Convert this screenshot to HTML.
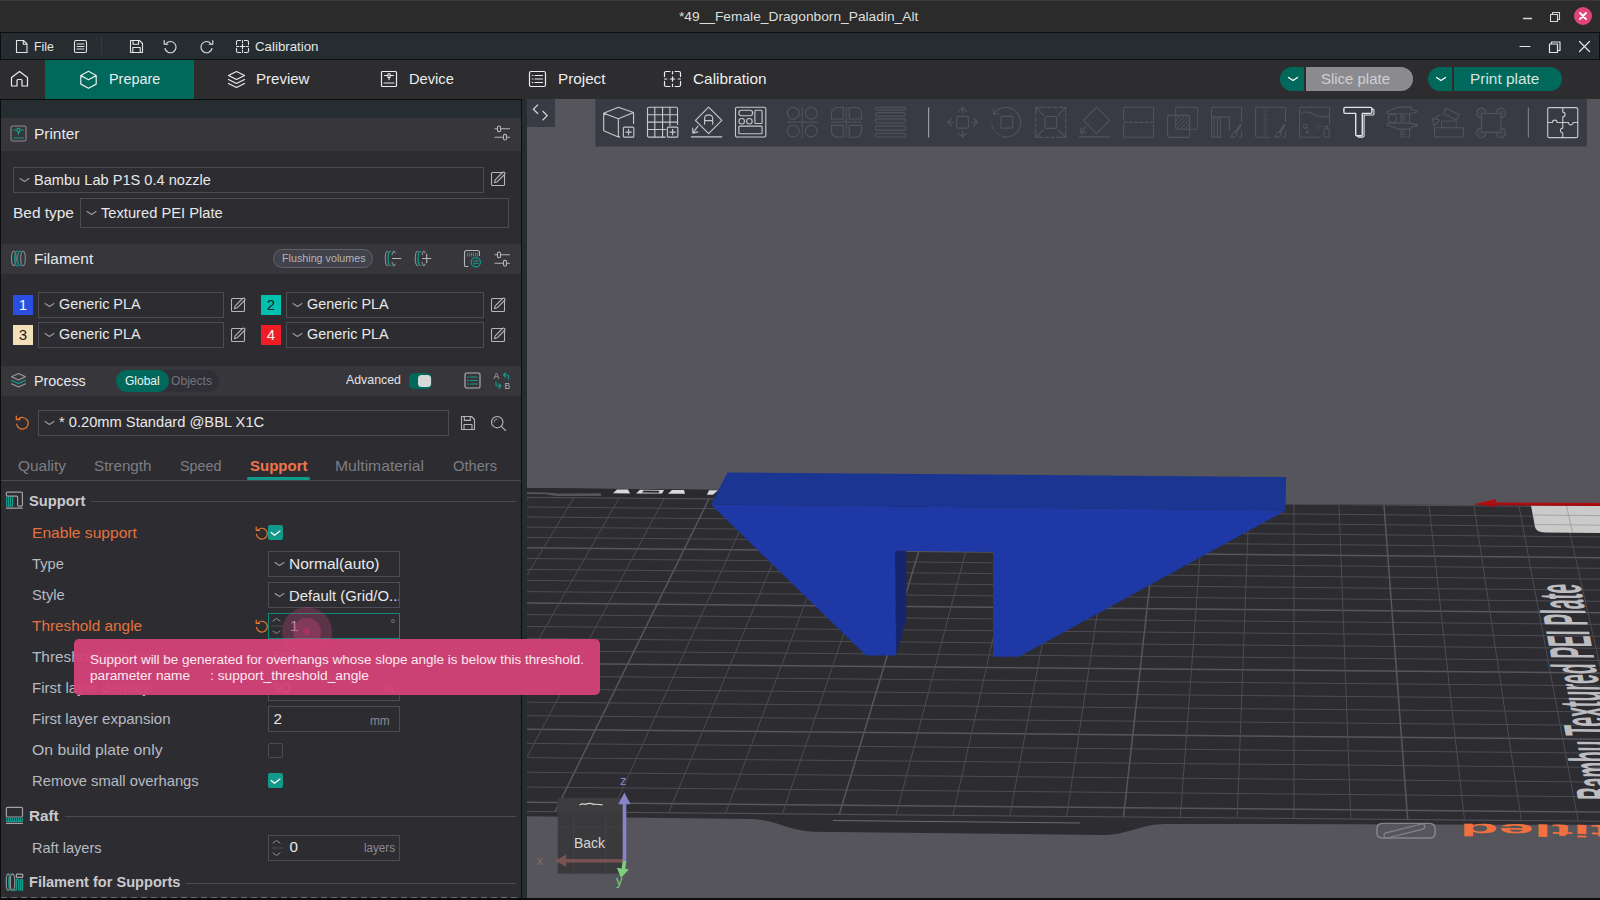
<!DOCTYPE html>
<html><head><meta charset="utf-8"><title>Bambu Studio</title>
<style>
html,body{margin:0;padding:0;background:#111;}
#root{position:relative;width:1600px;height:900px;overflow:hidden;background:#2d2d31;font-family:"Liberation Sans",sans-serif;}
.a{position:absolute;display:block;}
.t{position:absolute;white-space:pre;transform-origin:0 50%;}
</style></head><body><div id="root">
<div class="a" style="left:0px;top:0px;width:1600px;height:32px;background:#2b2b2b;"></div>
<div class="a" style="left:0px;top:0px;width:1600px;height:1px;background:#3a3a3a;"></div>
<div class="t" style="left:679.30px;top:8px;font-size:13px;line-height:17px;height:17px;color:#dedede;transform:scaleX(1.0579);">*49__Female_Dragonborn_Paladin_Alt</div>
<svg class="a" style="left:1520px;top:10px;" width="70" height="14" viewBox="0 0 70 14" fill="none" stroke-linecap="round" stroke-linejoin="round"><path d="M3.5 8.5h8" stroke="#d8d8d8" stroke-width="1.3"/><path d="M30.5 4.5h7v7h-7z M32.5 4.5v-2h7v7h-2" stroke="#d8d8d8" stroke-width="1.1"/></svg>
<div class="a" style="left:1574px;top:7px;width:18px;height:18px;background:#e2457c;border-radius:9px;"></div>
<svg class="a" style="left:1574px;top:7px;" width="18" height="18" viewBox="0 0 18 18" fill="none" stroke-linecap="round" stroke-linejoin="round"><path d="M6 6l6 6M12 6l-6 6" stroke="#fff" stroke-width="1.8"/></svg>
<div class="a" style="left:0px;top:32px;width:1600px;height:28px;background:#0c0e0f;"></div>
<div class="a" style="left:1px;top:33px;width:1598px;height:26px;background:#262d30;"></div>
<svg class="a" style="left:14px;top:39px;" width="15" height="15" viewBox="0 0 15 15" fill="none" stroke-linecap="round" stroke-linejoin="round"><path d="M2.5 1.5h7l3.5 3.5v8.5h-10.5z M9.3 1.7v3.6h3.5" stroke="#e4e4e6" stroke-width="1.1"/></svg>
<div class="t" style="left:34.00px;top:38px;font-size:13.3px;line-height:17px;height:17px;color:#e4e4e6;transform:scaleX(0.9240);">File</div>
<svg class="a" style="left:73px;top:39px;" width="15" height="15" viewBox="0 0 15 15" fill="none" stroke-linecap="round" stroke-linejoin="round"><rect x="1.5" y="1.5" width="12" height="12" rx="1.5" stroke="#e4e4e6" stroke-width="1.1"/><path d="M4 5h7M4 7.5h7M4 10h7" stroke="#e4e4e6" stroke-width="1.1"/></svg>
<div class="a" style="left:101px;top:37px;width:1px;height:17px;background:#343b3f;"></div>
<svg class="a" style="left:129px;top:39px;" width="15" height="15" viewBox="0 0 15 15" fill="none" stroke-linecap="round" stroke-linejoin="round"><path d="M1.5 1.5h9l3 3v9h-12z M4 1.8v3.4h5.5v-3.4 M3.8 13v-4.5h7.4v4.5" stroke="#e4e4e6" stroke-width="1.1"/></svg>
<svg class="a" style="left:163px;top:39px;" width="15" height="15" viewBox="0 0 15 15" fill="none" stroke-linecap="round" stroke-linejoin="round"><path d="M3.2 4.5A5.6 5.6 0 1 1 2 9.5" stroke="#e4e4e6" stroke-width="1.1"/><path d="M1.2 1.6v3.6h3.6" stroke="#e4e4e6" stroke-width="1.1"/></svg>
<svg class="a" style="left:199px;top:39px;" width="15" height="15" viewBox="0 0 15 15" fill="none" stroke-linecap="round" stroke-linejoin="round"><path d="M11.8 4.5A5.6 5.6 0 1 0 13 9.5" stroke="#e4e4e6" stroke-width="1.1"/><path d="M13.8 1.6v3.6h-3.6" stroke="#e4e4e6" stroke-width="1.1"/></svg>
<svg class="a" style="left:235px;top:39px;" width="15" height="15" viewBox="0 0 15 15" fill="none" stroke-linecap="round" stroke-linejoin="round"><path d="M1.5 5.58V3.0a1.5 1.5 0 0 1 1.5 -1.5H5.58 M9.42 1.5H12.0a1.5 1.5 0 0 1 1.5 1.5V5.58 M13.5 9.42V12.0a1.5 1.5 0 0 1 -1.5 1.5H9.42 M5.58 13.5H3.0a1.5 1.5 0 0 1 -1.5 -1.5V9.42 M7.5 1.5v2.3M7.5 13.5v-2.3M1.5 7.5h2.3M13.5 7.5h-2.3 M7.5 5.3v4.4M5.3 7.5h4.4" stroke="#e4e4e6" stroke-width="1.1"/></svg>
<div class="t" style="left:254.50px;top:38px;font-size:13.3px;line-height:17px;height:17px;color:#e4e4e6;transform:scaleX(0.9988);">Calibration</div>
<svg class="a" style="left:1518px;top:40px;" width="74" height="14" viewBox="0 0 74 14" fill="none" stroke-linecap="round" stroke-linejoin="round"><path d="M2 6.500h10" stroke="#e4e4e6" stroke-width="1.2"/><path d="M31.500 4h8v8.500h-8z M33.500 4v-2h8.500v8.500h-2.500" stroke="#e4e4e6" stroke-width="1.2"/><path d="M61.500 1.500l10 10M71.500 1.500l-10 10" stroke="#e4e4e6" stroke-width="1.2"/></svg>
<div class="a" style="left:0px;top:60px;width:1600px;height:39px;background:#2d2d2f;"></div>
<div class="a" style="left:45px;top:60px;width:149px;height:39px;background:#00695c;"></div>
<svg class="a" style="left:10px;top:70px;" width="19" height="18" viewBox="0 0 19 18" fill="none" stroke-linecap="round" stroke-linejoin="round"><path d="M1.500 7.500L9.500 1.500l8 6v8.500h-5.500v-5.500a1 1 0 0 0 -1-1h-3a1 1 0 0 0 -1 1v5.500h-5.500z" stroke="#ececee" stroke-width="1.2"/></svg>
<svg class="a" style="left:79px;top:70px;" width="19" height="19" viewBox="0 0 19 19" fill="none" stroke-linecap="round" stroke-linejoin="round"><path d="M9.500 1.300l7.700 4.200v8.600l-7.700 4.200l-7.700-4.200v-8.600z M1.900 5.600l7.600 4.200l7.600-4.200" stroke="#ececee" stroke-width="1.2"/></svg>
<div class="t" style="left:108.80px;top:70px;font-size:14.6px;line-height:18px;height:18px;color:#ececee;transform:scaleX(0.9858);">Prepare</div>
<svg class="a" style="left:227px;top:70px;" width="19" height="19" viewBox="0 0 19 19" fill="none" stroke-linecap="round" stroke-linejoin="round"><path d="M9.500 1.500l8 4l-8 4l-8-4z M1.500 9.500l8 4l8-4 M1.500 13.500l8 4l8-4" stroke="#ececee" stroke-width="1.2"/></svg>
<div class="t" style="left:256.00px;top:70px;font-size:14.6px;line-height:18px;height:18px;color:#ececee;transform:scaleX(1.0303);">Preview</div>
<svg class="a" style="left:380px;top:70px;" width="18" height="18" viewBox="0 0 18 18" fill="none" stroke-linecap="round" stroke-linejoin="round"><rect x="1.500" y="1.500" width="15" height="15" rx="1" stroke="#ececee" stroke-width="1.2"/><path d="M4.500 5.500h3.500m2 0h3.500 M8 3.800h2v3.700h-2z M9 7.500v2.200 M4 13h10" stroke="#ececee" stroke-width="1.100"/></svg>
<div class="t" style="left:409.00px;top:70px;font-size:14.6px;line-height:18px;height:18px;color:#ececee;transform:scaleX(1.0039);">Device</div>
<svg class="a" style="left:528px;top:70px;" width="19" height="18" viewBox="0 0 19 18" fill="none" stroke-linecap="round" stroke-linejoin="round"><rect x="1.500" y="1.500" width="16" height="15" rx="1.500" stroke="#ececee" stroke-width="1.2"/><path d="M7 5.500h7.500M7 9h7.500M7 12.500h7.500M4.300 5.500h.6M4.300 9h.6M4.300 12.500h.6" stroke="#ececee" stroke-width="1.200"/></svg>
<div class="t" style="left:557.50px;top:70px;font-size:14.6px;line-height:18px;height:18px;color:#ececee;transform:scaleX(1.0454);">Project</div>
<svg class="a" style="left:663px;top:70px;" width="19" height="18" viewBox="0 0 19 18" fill="none" stroke-linecap="round" stroke-linejoin="round"><path d="M1.5 6.6V3.0a1.5 1.5 0 0 1 1.5 -1.5H6.9399999999999995 M12.06 1.5H16.0a1.5 1.5 0 0 1 1.5 1.5V6.6 M17.5 11.4V15.0a1.5 1.5 0 0 1 -1.5 1.5H12.06 M6.9399999999999995 16.5H3.0a1.5 1.5 0 0 1 -1.5 -1.5V11.4 M9.5 1.5v2.3M9.5 16.5v-2.3M1.5 9.0h2.3M17.5 9.0h-2.3 M9.5 6.8v4.4M7.3 9.0h4.4" stroke="#ececee" stroke-width="1.2"/></svg>
<div class="t" style="left:692.50px;top:70px;font-size:14.6px;line-height:18px;height:18px;color:#ececee;transform:scaleX(1.0532);">Calibration</div>
<div class="a" style="left:1280px;top:67px;width:24px;height:24px;background:#00695c;border-radius:12px 0 0 12px;"></div>
<div class="a" style="left:1306px;top:67px;width:107px;height:24px;background:#8b8b8f;border-radius:0 12px 12px 0;"></div>
<svg class="a" style="left:1286px;top:73px;" width="14" height="12" viewBox="0 0 14 12" fill="none" stroke-linecap="round" stroke-linejoin="round"><path d="M2.500 4.500l4.500 3l4.500-3" stroke="#fff" stroke-width="1.300"/></svg>
<div class="t" style="left:1321.00px;top:69px;font-size:15.2px;line-height:19px;height:19px;color:#cfcfd3;transform:scaleX(0.9839);">Slice plate</div>
<div class="a" style="left:1428px;top:67px;width:24px;height:24px;background:#00695c;border-radius:12px 0 0 12px;"></div>
<div class="a" style="left:1454px;top:67px;width:108px;height:24px;background:#00695c;border-radius:0 12px 12px 0;"></div>
<svg class="a" style="left:1434px;top:73px;" width="14" height="12" viewBox="0 0 14 12" fill="none" stroke-linecap="round" stroke-linejoin="round"><path d="M2.500 4.500l4.500 3l4.500-3" stroke="#fff" stroke-width="1.300"/></svg>
<div class="t" style="left:1469.50px;top:69px;font-size:15.2px;line-height:19px;height:19px;color:#d4e4e0;transform:scaleX(1.0156);">Print plate</div>
<svg class="a" style="left:527px;top:99px" width="1073" height="799" viewBox="0 0 1073 799"><rect x="0" y="0" width="1073" height="799" fill="#56555b"/><path d="M0,389 L201,391 L201,400 L763,405.2 L1073,406.7 L1073,725.8 L638,724.9 C613,725 603,736 573,736 L288,732.8 C263,732.5 248,720.2 223,720 L0,717.2 Z" fill="#2d2c31"/><polygon points="0.0,389.0 201.0,391.0 201.0,399.3 0.0,398.4" fill="#2a292e"/><polygon points="0.0,393.2 21.0,393.4 31.0,394.5 74.0,394.2 74.0,397.1 29.0,397.1 18.0,395.3 0.0,395.1" fill="#55555b"/><polygon points="90.0,390.5 101.0,390.6 103.0,394.4 86.0,394.3" fill="#d9d9d9"/><polygon points="113.0,390.7 137.0,390.9 135.0,394.6 109.0,394.4" fill="#d9d9d9"/><polygon points="116.5,391.6 132.5,391.7 131.5,393.7 115.0,393.6" fill="#2a292e"/><polygon points="145.0,390.9 157.0,391.0 158.0,394.8 141.0,394.7" fill="#d9d9d9"/><polygon points="182.0,391.3 191.0,391.3 186.0,395.8 180.0,395.8" fill="#d9d9d9"/><clipPath id="gc"><path d="M0,389 L201,391 L201,400 L763,405.2 L1073,406.7 L1073,725.8 L638,724.9 C613,725 603,736 573,736 L288,732.8 C263,732.5 248,720.2 223,720 L0,717.2 Z"/></clipPath><g clip-path="url(#gc)"><line x1="-110.5" y1="397.2" x2="1109.0" y2="408.3" stroke="#505057" stroke-width="1.1"/><line x1="-117.7" y1="406.9" x2="1111.8" y2="418.1" stroke="#4c4c53" stroke-width="1.0"/><line x1="-125.0" y1="416.8" x2="1114.7" y2="428.1" stroke="#4c4c53" stroke-width="1.0"/><line x1="-132.5" y1="426.9" x2="1117.6" y2="438.3" stroke="#4c4c53" stroke-width="1.0"/><line x1="-140.0" y1="437.1" x2="1120.5" y2="448.6" stroke="#4c4c53" stroke-width="1.0"/><line x1="-147.7" y1="447.5" x2="1123.5" y2="459.1" stroke="#56565d" stroke-width="1.5"/><line x1="-155.5" y1="458.1" x2="1126.6" y2="469.8" stroke="#4c4c53" stroke-width="1.0"/><line x1="-163.5" y1="468.9" x2="1129.7" y2="480.6" stroke="#4c4c53" stroke-width="1.0"/><line x1="-171.6" y1="479.8" x2="1132.8" y2="491.7" stroke="#4c4c53" stroke-width="1.0"/><line x1="-179.9" y1="491.0" x2="1136.0" y2="502.9" stroke="#4c4c53" stroke-width="1.0"/><line x1="-188.2" y1="502.3" x2="1139.3" y2="514.4" stroke="#56565d" stroke-width="1.5"/><line x1="-196.8" y1="513.8" x2="1142.6" y2="526.0" stroke="#4c4c53" stroke-width="1.0"/><line x1="-205.5" y1="525.6" x2="1146.0" y2="537.9" stroke="#4c4c53" stroke-width="1.0"/><line x1="-214.3" y1="537.6" x2="1149.5" y2="550.0" stroke="#4c4c53" stroke-width="1.0"/><line x1="-223.3" y1="549.7" x2="1153.0" y2="562.3" stroke="#4c4c53" stroke-width="1.0"/><line x1="-232.5" y1="562.2" x2="1156.6" y2="574.8" stroke="#56565d" stroke-width="1.5"/><line x1="-241.9" y1="574.8" x2="1160.2" y2="587.6" stroke="#4c4c53" stroke-width="1.0"/><line x1="-251.4" y1="587.7" x2="1163.9" y2="600.6" stroke="#4c4c53" stroke-width="1.0"/><line x1="-261.1" y1="600.8" x2="1167.7" y2="613.8" stroke="#4c4c53" stroke-width="1.0"/><line x1="-271.0" y1="614.2" x2="1171.6" y2="627.3" stroke="#4c4c53" stroke-width="1.0"/><line x1="-281.1" y1="627.8" x2="1175.5" y2="641.1" stroke="#56565d" stroke-width="1.5"/><line x1="-291.4" y1="641.7" x2="1179.5" y2="655.1" stroke="#4c4c53" stroke-width="1.0"/><line x1="-301.9" y1="655.9" x2="1183.6" y2="669.4" stroke="#4c4c53" stroke-width="1.0"/><line x1="-312.6" y1="670.4" x2="1187.8" y2="684.1" stroke="#4c4c53" stroke-width="1.0"/><line x1="-323.5" y1="685.1" x2="1192.0" y2="698.9" stroke="#4c4c53" stroke-width="1.0"/><line x1="-334.6" y1="700.2" x2="1196.4" y2="714.2" stroke="#56565d" stroke-width="1.5"/><line x1="-341.4" y1="709.4" x2="1199.0" y2="723.4" stroke="#505057" stroke-width="1.1"/><line x1="-88.0" y1="397.4" x2="-313.0" y2="709.6" stroke="#4c4c53" stroke-width="1.0"/><line x1="-43.0" y1="397.8" x2="-256.2" y2="710.2" stroke="#56565d" stroke-width="1.5"/><line x1="2.0" y1="398.2" x2="-199.3" y2="710.7" stroke="#4c4c53" stroke-width="1.0"/><line x1="47.0" y1="398.6" x2="-142.5" y2="711.2" stroke="#4c4c53" stroke-width="1.0"/><line x1="92.0" y1="399.1" x2="-85.6" y2="711.7" stroke="#4c4c53" stroke-width="1.0"/><line x1="137.0" y1="399.5" x2="-28.8" y2="712.2" stroke="#4c4c53" stroke-width="1.0"/><line x1="182.0" y1="399.9" x2="28.0" y2="712.8" stroke="#56565d" stroke-width="1.5"/><line x1="227.0" y1="400.3" x2="84.9" y2="713.3" stroke="#4c4c53" stroke-width="1.0"/><line x1="272.0" y1="400.7" x2="141.7" y2="713.8" stroke="#4c4c53" stroke-width="1.0"/><line x1="317.0" y1="401.1" x2="198.6" y2="714.3" stroke="#4c4c53" stroke-width="1.0"/><line x1="362.0" y1="401.5" x2="255.4" y2="714.8" stroke="#4c4c53" stroke-width="1.0"/><line x1="407.0" y1="401.9" x2="312.3" y2="715.3" stroke="#56565d" stroke-width="1.5"/><line x1="452.0" y1="402.3" x2="369.1" y2="715.9" stroke="#4c4c53" stroke-width="1.0"/><line x1="497.0" y1="402.7" x2="425.9" y2="716.4" stroke="#4c4c53" stroke-width="1.0"/><line x1="542.0" y1="403.1" x2="482.8" y2="716.9" stroke="#4c4c53" stroke-width="1.0"/><line x1="587.0" y1="403.6" x2="539.6" y2="717.4" stroke="#4c4c53" stroke-width="1.0"/><line x1="632.0" y1="404.0" x2="596.5" y2="717.9" stroke="#56565d" stroke-width="1.5"/><line x1="677.0" y1="404.4" x2="653.3" y2="718.5" stroke="#4c4c53" stroke-width="1.0"/><line x1="722.0" y1="404.8" x2="710.2" y2="719.0" stroke="#4c4c53" stroke-width="1.0"/><line x1="767.0" y1="405.2" x2="767.0" y2="719.5" stroke="#4c4c53" stroke-width="1.0"/><line x1="812.0" y1="405.6" x2="823.8" y2="720.0" stroke="#4c4c53" stroke-width="1.0"/><line x1="857.0" y1="406.0" x2="880.7" y2="720.5" stroke="#56565d" stroke-width="1.5"/><line x1="902.0" y1="406.4" x2="937.5" y2="721.0" stroke="#4c4c53" stroke-width="1.0"/><line x1="947.0" y1="406.8" x2="994.4" y2="721.6" stroke="#4c4c53" stroke-width="1.0"/><line x1="992.0" y1="407.2" x2="1051.2" y2="722.1" stroke="#4c4c53" stroke-width="1.0"/><line x1="1037.0" y1="407.7" x2="1108.1" y2="722.6" stroke="#4c4c53" stroke-width="1.0"/><line x1="1082.0" y1="408.1" x2="1164.9" y2="723.1" stroke="#56565d" stroke-width="1.5"/></g><line x1="306" y1="721.5" x2="553" y2="724" stroke="#6a6a70" stroke-width="1"/><path d="M1004,406.5 L1073,406.9 L1073,433.9 L1018,433.5 Q1009,433.29999999999995 1008,428 Z" fill="#c9cac9"/><path d="M1006,416 L1073,416.6 M1007.5,425.5 L1073,426.20000000000005 M1039.5,406.7 L1045.5,433.70000000000005" stroke="#a4a4a8" stroke-width="1" fill="none"/><polygon points="946.6,405.3 969.0,400.0 969.0,403.5 1073.0,404.0 1073.0,406.9 969.0,406.2 969.0,408.0" fill="#a80b0d"/><polygon points="946.6,405.3 969.0,400.0 969.0,403.5 1073.0,403.7 1073.0,405.0 969.0,404.7" fill="#c41414" opacity=".35"/><text transform="matrix(-0.0829,-0.4364,1.560,0.013,1094,701)" font-family="Liberation Sans, sans-serif" font-weight="700" font-size="40" fill="#bdbdc0">Bambu Textured PEI Plate</text><text transform="matrix(-3.980,-0.040,0,-1.080,1169.5,727)" font-family="Liberation Sans, sans-serif" font-weight="700" font-size="16" fill="#f07040">Untitled</text><path d="M856,724.5 h46 q6,0 6,5 v5 q0,4.500 -6,4.500 h-46 q-6,0 -6,-4.500 v-5 q0,-5 6,-5 z" fill="none" stroke="#85848b" stroke-width="1.500"/><rect x="-21" y="-2.600" width="42" height="5.200" rx="2.600" transform="translate(877.5,732) rotate(-14)" fill="none" stroke="#85848b" stroke-width="1.200"/><polygon points="184.0,405.5 758.6,411.5 492.0,557.7 466.0,557.7 466.0,453.0 368.2,451.7 369.0,556.5 339.0,556.5" fill="#1e38a6"/><polygon points="200.5,373.5 759.0,378.0 758.6,411.5 184.0,405.5" fill="#1b3593"/><polygon points="368.2,451.7 379.2,451.8 379.2,520.0 369.3,556.5" fill="#15266f"/><rect x="0" y="0" width="28" height="28" fill="#393b44"/><path d="M11,5.600 L6.400,10.200 L11,14.800 M15.600,12 L20.200,16.600 L15.600,21.200" fill="none" stroke="#d0d0d4" stroke-width="1.300"/><rect x="68.29999999999995" y="0" width="991.6000000000001" height="47.700" fill="#393b44"/><rect x="30.799999999999955" y="698.9" width="65" height="75.800" fill="#3a3a3c"/><rect x="30.799999999999955" y="698.9" width="65" height="14" fill="#3d3d3f"/><path d="M46.5,713v61.500 M78.5,713v61.500 M31,728h65" stroke="#414143" stroke-width="1" fill="none"/><path d="M52.5,706 q3,-1.800 6,-.600 q4,-2 8,0 q3,-.500 9,.500" stroke="#d8d8d8" stroke-width="1.200" fill="none"/><text x="47" y="749.4" font-family="Liberation Sans, sans-serif" font-size="14.500" fill="#d6d6d6" textLength="31" lengthAdjust="spacingAndGlyphs">Back</text><polygon points="28.0,761.7 39.3,755.5 39.3,760.0 96.0,760.0 96.0,763.4 39.3,763.4 39.3,767.8" fill="#a05f5f" opacity=".62"/><polygon points="97.4,693.4 103.6,705.2 99.3,705.2 99.3,762.0 95.7,762.0 95.7,705.2 91.2,705.2" fill="#8684cb"/><polygon points="95.7,762.0 99.3,762.0 98.3,769.8 101.8,770.5 94.0,779.0 89.8,768.8 94.6,769.6" fill="#7ccd7c"/><text x="93" y="686.3" font-family="Liberation Sans, sans-serif" font-size="13" fill="#8a88d2">z</text><text x="9.799999999999955" y="766" font-family="Liberation Sans, sans-serif" font-size="13" fill="#8c6469">x</text><text x="89" y="785.5" font-family="Liberation Sans, sans-serif" font-size="13" fill="#7ccd7c">y</text><g transform="translate(76.0,7.7) scale(0.985)" fill="none" stroke="#c6c6cb" stroke-width="1.15" stroke-linecap="round" stroke-linejoin="round"><path d="M15.600 .600L31 5.900V17 M15.600 .600L.700 6.600V24.500L15.600 30.800V12.300L31 5.900M.700 6.600L15.600 12.300 M15.600 30.800l1.500-.200"/><rect x="20.700" y="20.700" width="10.600" height="10.200" rx="1" fill="#393b44"/><path d="M26 23v5.600M23.200 25.800h5.600"/></g><g transform="translate(120.0,7.7) scale(0.985)" fill="none" stroke="#c6c6cb" stroke-width="1.15" stroke-linecap="round" stroke-linejoin="round"><path d="M31 18V2a1.500 1.500 0 0 0 -1.500-1.500H2A1.500 1.500 0 0 0 .500 2V29.400a1.500 1.500 0 0 0 1.500 1.500H18.500"/><path d="M7.900 .500V30.800M15.800 .500V30.800M23.300 .500V19 M.500 8.200H31M.500 15.700H31M.500 23.100H19"/><rect x="20.700" y="20.700" width="10.600" height="10.200" rx="1" fill="#393b44"/><path d="M26 23v5.600M23.200 25.800h5.600"/></g><g transform="translate(164.0,7.7) scale(0.985)" fill="none" stroke="#c6c6cb" stroke-width="1.15" stroke-linecap="round" stroke-linejoin="round"><path d="M17.900 .500L31.300 13.900L17.900 27.300L4.500 13.900Z"/><path d="M7 19.700L1.900 26.800M1.700 21.600l.200 5.300l5-1.300"/><path d="M.400 30.700H31.200"/><path d="M13.800 17.800V11.500a4.100 3.200 0 0 1 8.200 0V17.800M13.800 14.200H22"/></g><g transform="translate(208.0,7.7) scale(0.985)" fill="none" stroke="#c6c6cb" stroke-width="1.15" stroke-linecap="round" stroke-linejoin="round"><rect x=".500" y=".500" width="30.800" height="30.300" rx="1.500"/><rect x="3.900" y="3.600" width="14" height="5.600" rx="2.800"/><rect x="20.200" y="3.600" width="7.300" height="13.500" rx="1"/><circle cx="6.800" cy="14.800" r="2.800"/><circle cx="14.600" cy="14.800" r="2.800"/><rect x="3.900" y="19.700" width="23.600" height="7.800" rx="1"/></g><g transform="translate(260.0,7.7) scale(0.985)" fill="none" stroke="#50525c" stroke-width="1.15" stroke-linecap="round" stroke-linejoin="round"><circle cx="6.300" cy="6.600" r="6"/><circle cx="24.700" cy="6.600" r="6"/><circle cx="6.300" cy="24.700" r="6"/><circle cx="24.700" cy="24.700" r="6"/><path d="M15.500 .500V31M.300 15.700H31" stroke-dasharray="4 1.500"/></g><g transform="translate(304.0,7.7) scale(0.985)" fill="none" stroke="#50525c" stroke-width="1.15" stroke-linecap="round" stroke-linejoin="round"><path d="M12.500 .800H6.500a6 6 0 0 0 -6 6V12.500H12.500Z M18.500 .800H25a6 6 0 0 1 6 6V12.500H18.500Z M12.500 19H.500V25a6 6 0 0 0 6 6H12.500Z M18.500 19H31V25a6 6 0 0 1 -6 6H18.500Z"/><path d="M15.500 .500V31M.300 15.700H31" stroke-dasharray="4 1.500"/></g><g transform="translate(348.0,7.7) scale(0.985)" fill="none" stroke="#50525c" stroke-width="1.15" stroke-linecap="round" stroke-linejoin="round"><rect x=".500" y=".600" width="30.500" height="2.600" rx="1.300"/><rect x=".500" y="6" width="30.500" height="3.600" rx="1.500"/><rect x=".500" y="12.300" width="30.500" height="4.300" rx="1.500"/><rect x=".500" y="19.500" width="30.500" height="4.300" rx="1.500"/><rect x=".500" y="27" width="30.500" height="3.800" rx="1.500"/></g><g transform="translate(420.0,7.7) scale(0.985)" fill="none" stroke="#50525c" stroke-width="1.15" stroke-linecap="round" stroke-linejoin="round"><rect x="9.800" y="9.800" width="12" height="12" rx="1.500"/><path d="M15.800 6.500V.800M12 4.500L15.800 .700L19.600 4.500 M15.800 25V30.800M12 27L15.800 30.800L19.600 27 M6.500 15.800H.700M4.500 12L.700 15.800L4.500 19.600 M25 15.800H30.800M27 12L30.800 15.800L27 19.600"/></g><g transform="translate(464.0,7.7) scale(0.985)" fill="none" stroke="#50525c" stroke-width="1.15" stroke-linecap="round" stroke-linejoin="round"><rect x="10" y="9.800" width="12" height="12" rx="1.500"/><path d="M3.200 6.700A15 15 0 1 1 15.800 30.800"/><path d="M15.800 30.800A15 15 0 0 1 .900 15.800" stroke-dasharray="4.500 3"/><path d="M2.600 2.300v5h5"/></g><g transform="translate(508.0,7.7) scale(0.985)" fill="none" stroke="#50525c" stroke-width="1.15" stroke-linecap="round" stroke-linejoin="round"><rect x=".700" y=".700" width="30.400" height="30.400" stroke-dasharray="3.500 2.500"/><rect x="10" y="10" width="12" height="12" rx="1.500"/><path d="M8.500 8.500L1 1M1 5.500V1H5.500 M23.500 8.500L31 1M26.500 1H31V5.500 M8.500 23.500L1 31M1 26.500V31H5.500 M23.500 23.500L31 31M31 26.500V31H26.500"/></g><g transform="translate(552.0,7.7) scale(0.985)" fill="none" stroke="#50525c" stroke-width="1.15" stroke-linecap="round" stroke-linejoin="round"><path d="M17.900 .500L31.300 13.900L17.900 27.300L4.500 13.900Z"/><path d="M7 19.700L1.900 26.800M1.700 21.600l.200 5.300l5-1.300"/><path d="M.400 30.700H31.200"/></g><g transform="translate(596.0,7.7) scale(0.985)" fill="none" stroke="#50525c" stroke-width="1.15" stroke-linecap="round" stroke-linejoin="round"><path d="M.600 13.500V2A1.500 1.500 0 0 1 2.100 .500H29.500A1.500 1.500 0 0 1 31 2V13.500 M.600 18.500V29.500A1.500 1.500 0 0 0 2.100 31H29.500A1.500 1.500 0 0 0 31 29.500V18.500"/><path d="M.600 15.900H31" stroke-dasharray="3.500 2"/></g><g transform="translate(640.0,7.7) scale(0.985)" fill="none" stroke="#50525c" stroke-width="1.15" stroke-linecap="round" stroke-linejoin="round"><rect x="8.800" y=".600" width="22.300" height="22.300" rx="1.500"/><rect x=".600" y="8.800" width="22.300" height="22.300" rx="1.500"/><path d="M9 14L14 9M9 18.500L18.500 9M9 22.800L22.800 9M13 22.800L22.800 13M17.500 22.800L22.800 17.500" stroke-width=".900"/></g><g transform="translate(684.0,7.7) scale(0.985)" fill="none" stroke="#50525c" stroke-width="1.15" stroke-linecap="round" stroke-linejoin="round"><path d="M.600 31V2A1.500 1.500 0 0 1 2.100 .500H29.500A1.500 1.500 0 0 1 31 2V15.300 M31 25V31H28.500 M.600 31H9.500"/><path d="M.600 10.600H18.700V24.700 M3.200 10.600V31M6.500 10.600V31M9.500 10.600V31"/><path d="M29.900 18.800L25.600 25.400" stroke-width="2.300"/><path d="M19.600 30.800c2-.600 1.700-3.800 4-4.800c2.200-.700 3.300 1.300 2.200 3.100c-1.100 1.500-3.800 2-6.200 1.700z"/></g><g transform="translate(728.0,7.7) scale(0.985)" fill="none" stroke="#50525c" stroke-width="1.15" stroke-linecap="round" stroke-linejoin="round"><path d="M15.500 31H2.100A1.500 1.500 0 0 1 .600 29.500V2A1.500 1.500 0 0 1 2.100 .500H29.500A1.500 1.500 0 0 1 31 2V15.300 M31 25V31H28.500"/><path d="M8.8 2.8h2M10.4 4.8h2M8.3 6.8h2M9.9 8.8h2M8.8 10.8h2M10.4 12.8h2M8.3 14.8h2M9.9 16.8h2M8.8 18.8h2M10.4 20.8h2M8.3 22.8h2M9.9 24.8h2M8.8 26.8h2M10.4 28.8h2" stroke-width=".900"/><path d="M29.900 18.800L25.600 25.400" stroke-width="2.300"/><path d="M19.600 30.800c2-.600 1.700-3.800 4-4.800c2.200-.700 3.300 1.300 2.200 3.100c-1.100 1.500-3.800 2-6.200 1.700z"/></g><g transform="translate(772.0,7.7) scale(0.985)" fill="none" stroke="#50525c" stroke-width="1.15" stroke-linecap="round" stroke-linejoin="round"><path d="M22.500 31H2.100A1.500 1.500 0 0 1 .600 29.500V2A1.500 1.500 0 0 1 2.100 .500H29.500A1.500 1.500 0 0 1 31 2V18"/><path d="M.600 7.800C3.500 5.800 6 5.200 8.500 5.500C14 6.200 19 10.800 25.400 10.600C27.500 10.500 29.500 9.700 31 8.700"/><circle cx="6.400" cy="19.800" r="2"/><circle cx="8.500" cy="25.800" r="1.100"/><path d="M18.5 16.8h.1M18.5 18.4h.1M18.5 20h.1M18.5 21.6h.1M18.5 23.2h.1M20.5 17.6h.1M20.5 19.2h.1M20.5 20.8h.1M20.5 22.4h.1M22.5 18.4h.1M22.5 20h.1M22.5 21.6h.1M24.5 20h.1" stroke-width=".900"/><rect x="25.400" y="22.400" width="5.300" height="8.400" rx="1.200"/><path d="M26.800 22.400v-2.400h2.300v2.400"/></g><g transform="translate(816.0,7.7) scale(0.985)" fill="none" stroke="#e4e4e8" stroke-width="1.15" stroke-linecap="round" stroke-linejoin="round"><path d="M2.200 .700H28a1.300 1.300 0 0 1 1.300 1.300V5.500a1.300 1.300 0 0 1 -1.300 1.300H19.600V28.200a1.300 1.300 0 0 1 -1.300 1.300H14.200a1.300 1.300 0 0 1 -1.300-1.300V6.800H2.200A1.300 1.300 0 0 1 .900 5.500V2A1.300 1.300 0 0 1 2.200 .700Z" stroke-width="1.400"/><path d="M29.500 2.300h.700a1.200 1.200 0 0 1 1.200 1.200V7.300a1.200 1.200 0 0 1 -1.200 1.200H21.400V29.600a1.300 1.300 0 0 1 -1.300 1.300H16a1.300 1.300 0 0 1 -1.300-1.300" stroke-width="1.100"/></g><g transform="translate(860.0,7.7) scale(0.985)" fill="none" stroke="#50525c" stroke-width="1.15" stroke-linecap="round" stroke-linejoin="round"><path d="M.4 5L12.1 .4H24.7V3.100L30.800 4.100V5.300L23.300 7.200H.4Z"/><path d="M.4 16.700H23.300L30.800 18.400V19.500L24.700 20.500V22.800H12.100L.4 18.600Z"/><circle cx="5.500" cy="11.800" r="4.200"/><path d="M14.400 7.200V16.700M22.900 7.200V16.700M14.400 22.800V30.800H18.200M20.600 30.800H22.900V22.800"/><path d="M14.400 9H18.200M14.400 10.800H18.200M14.400 12.600H18.200M14.400 14.400H18.200M14.400 24.600H18.200M14.400 26.400H18.200M14.400 28.200H18.200" stroke-width=".800"/></g><g transform="translate(905.0,7.7) scale(0.985)" fill="none" stroke="#50525c" stroke-width="1.15" stroke-linecap="round" stroke-linejoin="round"><rect x="2.500" y="21.400" width="29.400" height="9.400"/><path d="M14.400 1.500L27.800 8.100L24.700 13.500L11.400 6.900Z"/><path d="M9.700 21V14.700H24.700V21" stroke-dasharray="1.300 1.300"/><path d="M9.700 21.400l1-1l1 1l1-1l1 1l1-1l1 1l1-1l1 1l1-1l1 1l1-1l1 1l1-1l1 1l1-1" stroke-width=".700"/><path d="M8.300 8.100C5.500 9 4.300 10.300 3.700 12 M.4 11.900L7.900 13.500L2.200 19.400Z"/></g><g transform="translate(949.0,7.7) scale(0.985)" fill="none" stroke="#50525c" stroke-width="1.15" stroke-linecap="round" stroke-linejoin="round"><circle cx="5.3" cy="6.4" r="4.900"/><path d="M1.7999999999999998 7.9L6.8 2.9000000000000004M2.8 9.9L8.8 3.9000000000000004M0.7999999999999998 5.4L4.3 1.9000000000000004M5.8 10.9L9.8 6.9" stroke-width=".800"/><circle cx="25.2" cy="6.4" r="4.900"/><path d="M21.7 7.9L26.7 2.9000000000000004M22.7 9.9L28.7 3.9000000000000004M20.7 5.4L24.2 1.9000000000000004M25.7 10.9L29.7 6.9" stroke-width=".800"/><circle cx="5.3" cy="26.6" r="4.900"/><path d="M1.7999999999999998 28.1L6.8 23.1M2.8 30.1L8.8 24.1M0.7999999999999998 25.6L4.3 22.1M5.8 31.1L9.8 27.1" stroke-width=".800"/><circle cx="25.2" cy="26.6" r="4.900"/><path d="M21.7 28.1L26.7 23.1M22.7 30.1L28.7 24.1M20.7 25.6L24.2 22.1M25.7 31.1L29.7 27.1" stroke-width=".800"/><rect x="5.600" y="6.900" width="19.600" height="19.200" fill="#393b44"/></g><g transform="translate(1020.0,7.7) scale(0.985)" fill="none" stroke="#c6c6cb" stroke-width="1.15" stroke-linecap="round" stroke-linejoin="round"><rect x=".700" y=".900" width="30.500" height="30.500" rx="1.500"/><path d="M16 .900V5.500a2.400 2.400 0 1 1 0 4.800V16 M16 31.400V26.500a2.400 2.400 0 1 1 0 -4.800V16"/><path d="M.700 16H5.500a2.400 2.400 0 1 1 4.800 0H16 M31.200 16H26.500a2.400 2.400 0 1 1 -4.800 0H16"/></g><path d="M401.6,8.5V38.5" stroke="#9a9aa0" stroke-width="1.200"/><path d="M1001.4000000000001,8.5V38.5" stroke="#7c7c84" stroke-width="1.100"/></svg>
<div class="a" style="left:0px;top:898px;width:1600px;height:2px;background:#0b0c0d;"></div>
<div class="a" style="left:0px;top:99px;width:522px;height:801px;background:#0b0c0d;"></div>
<div class="a" style="left:1px;top:100px;width:520px;height:798px;background:#2d2d31;"></div>
<div class="a" style="left:522px;top:99px;width:5px;height:799px;background:#262d30;"></div>
<div class="a" style="left:1px;top:100px;width:520px;height:18px;background:#262d30;"></div>
<div class="a" style="left:1px;top:118px;width:520px;height:33px;background:#36363b;"></div>
<svg class="a" style="left:10px;top:125px;" width="17" height="17" viewBox="0 0 17 17" fill="none" stroke-linecap="round" stroke-linejoin="round"><rect x="1" y="1" width="15" height="15" rx="1.500" stroke="#8a8a90" stroke-width="1.100"/><path d="M3.500 5h3m3.500 0h3.500 M7.300 3.300h2.400v3.600h-2.400z M8.500 7v2.600 M3.500 13h10" stroke="#12998a" stroke-width="1.200"/></svg>
<div class="t" style="left:34.00px;top:124px;font-size:15.2px;line-height:19px;height:19px;color:#e8e8ea;transform:scaleX(1.0164);">Printer</div>
<svg class="a" style="left:494px;top:125px;" width="17" height="17" viewBox="0 0 17 17" fill="none" stroke-linecap="round" stroke-linejoin="round"><path d="M1 3.800h2.500 M6.500 3.800h9 M1 12.200h8.500 M12.500 12.200h3" stroke="#b4b4ba" stroke-width="1.100"/><rect x="3.500" y="1" width="3" height="5.600" rx="1.200" stroke="#b4b4ba" stroke-width="1.100"/><rect x="9.500" y="9.400" width="3" height="5.600" rx="1.200" stroke="#b4b4ba" stroke-width="1.100"/></svg>
<div class="a" style="left:13px;top:167px;width:471px;height:26px;border:1px solid #4c4c54;box-sizing:border-box;"></div>
<svg class="a" style="left:19px;top:176.5px;" width="11" height="7" viewBox="0 0 11 7" fill="none" stroke-linecap="round" stroke-linejoin="round"><path d="M1 1.500l4.500 3l4.500-3" stroke="#9a9aa2" stroke-width="1.100"/></svg>
<div class="t" style="left:34.00px;top:170px;font-size:15.2px;line-height:19px;height:19px;color:#e8e8ea;transform:scaleX(0.9609);">Bambu Lab P1S 0.4 nozzle</div>
<svg class="a" style="left:490px;top:171px;" width="17" height="17" viewBox="0 0 17 17" fill="none" stroke-linecap="round" stroke-linejoin="round"><path d="M13 1.500h-10.500a1 1 0 0 0 -1 1v11a1 1 0 0 0 1 1h11a1 1 0 0 0 1-1v-9.500" stroke="#b4b4ba" stroke-width="1.100"/><path d="M5.200 8.800l7.300-7.300a1.400 1.400 0 0 1 2 2l-7.300 7.300l-2.800.800z" stroke="#b4b4ba" stroke-width="1.100"/></svg>
<div class="t" style="left:13.00px;top:203px;font-size:15.2px;line-height:19px;height:19px;color:#e8e8ea;transform:scaleX(1.0168);">Bed type</div>
<div class="a" style="left:80px;top:198px;width:429px;height:30px;border:1px solid #4c4c54;box-sizing:border-box;"></div>
<svg class="a" style="left:86px;top:209.5px;" width="11" height="7" viewBox="0 0 11 7" fill="none" stroke-linecap="round" stroke-linejoin="round"><path d="M1 1.500l4.500 3l4.500-3" stroke="#9a9aa2" stroke-width="1.100"/></svg>
<div class="t" style="left:101.00px;top:203px;font-size:15.2px;line-height:19px;height:19px;color:#e8e8ea;transform:scaleX(0.9676);">Textured PEI Plate</div>
<div class="a" style="left:1px;top:244px;width:520px;height:30px;background:#36363b;"></div>
<svg class="a" style="left:10px;top:250px;" width="17" height="17" viewBox="0 0 17 17" fill="none" stroke-linecap="round" stroke-linejoin="round"><ellipse cx="3.800" cy="8.500" rx="2.300" ry="7.300" stroke="#8a8a90" stroke-width="1.100"/><path d="M7.300 1.200a2.600 7.300 0 0 0 0 14.600 M10.300 1.200a2.600 7.300 0 0 0 0 14.600" stroke="#12998a" stroke-width="1.200"/><ellipse cx="13" cy="8.500" rx="2.300" ry="7.300" stroke="#8a8a90" stroke-width="1.100"/></svg>
<div class="t" style="left:34.00px;top:249px;font-size:15.2px;line-height:19px;height:19px;color:#e8e8ea;transform:scaleX(1.0175);">Filament</div>
<div class="a" style="left:273px;top:249px;width:100px;height:19px;background:#42424b;border:1px solid #62626c;box-sizing:border-box;border-radius:9.5px;"></div>
<div class="t" style="left:281.50px;top:251px;font-size:11.5px;line-height:14px;height:14px;color:#b2b2b8;transform:scaleX(0.9332);">Flushing volumes</div>
<svg class="a" style="left:383.6px;top:249.6px;" width="18" height="17" viewBox="0 0 18 17" fill="none" stroke-linecap="round" stroke-linejoin="round"><path d="M3.800 1.300a2.500 7.200 0 0 0 0 14.400" stroke="#8a8a90" stroke-width="1.100"/><path d="M6.600 1.300a2.500 7.200 0 0 0 0 14.400" stroke="#12998a" stroke-width="1.300"/><path d="M9.800 1.300a2.500 7.200 0 0 0 -1.800 3.500 M8 12.200a2.500 7.200 0 0 0 1.800 3.500" stroke="#8a8a90" stroke-width="1.100"/><path d="M9.800 1.300a2 2 0 0 1 1.300 1.600 M9.800 15.700a2 2 0 0 0 1.300-1.600" stroke="#8a8a90" stroke-width="1.100"/><path d="M8.500 8.500h8.300" stroke="#b4b4ba" stroke-width="1.100"/></svg>
<svg class="a" style="left:413.6px;top:249.6px;" width="18" height="17" viewBox="0 0 18 17" fill="none" stroke-linecap="round" stroke-linejoin="round"><path d="M3.800 1.300a2.500 7.200 0 0 0 0 14.400" stroke="#8a8a90" stroke-width="1.100"/><path d="M6.600 1.300a2.500 7.200 0 0 0 0 14.400" stroke="#12998a" stroke-width="1.300"/><path d="M9.800 1.300a2.500 7.200 0 0 0 -1.800 3.500 M8 12.200a2.500 7.200 0 0 0 1.800 3.500" stroke="#8a8a90" stroke-width="1.100"/><path d="M9.800 1.300a2 2 0 0 1 1.300 1.600 M9.800 15.700a2 2 0 0 0 1.300-1.600" stroke="#8a8a90" stroke-width="1.100"/><path d="M8.500 8.500h8.300M12.700 4.400v8.200" stroke="#b4b4ba" stroke-width="1.100"/></svg>
<svg class="a" style="left:463px;top:249px;" width="19" height="19" viewBox="0 0 19 19" fill="none" stroke-linecap="round" stroke-linejoin="round"><path d="M5 17.500h-2.500a1 1 0 0 1 -1-1v-13a2 2 0 0 1 2-2h11a2 2 0 0 1 2 2v3" stroke="#b4b4ba" stroke-width="1.100"/><path d="M4.500 4v3M6.500 4v3M8.500 4v3M10.500 4v3M12.500 4v3M14.500 4v3" stroke="#12998a" stroke-width="1.100"/><circle cx="12.800" cy="13.300" r="4.600" stroke="#12998a" stroke-width="1.200"/><path d="M10.500 12.200h4.600l-1.300-1.300 M15.100 14.400h-4.600l1.300 1.300" stroke="#12998a" stroke-width="1"/></svg>
<svg class="a" style="left:494px;top:250.7px;" width="17" height="17" viewBox="0 0 17 17" fill="none" stroke-linecap="round" stroke-linejoin="round"><path d="M1 3.800h2.500 M6.500 3.800h9 M1 12.200h8.500 M12.500 12.200h3" stroke="#b4b4ba" stroke-width="1.100"/><rect x="3.500" y="1" width="3" height="5.600" rx="1.200" stroke="#b4b4ba" stroke-width="1.100"/><rect x="9.500" y="9.400" width="3" height="5.600" rx="1.200" stroke="#b4b4ba" stroke-width="1.100"/></svg>
<div class="a" style="left:13px;top:295px;width:20px;height:20px;background:#2a4fe0;"></div>
<div class="t" style="left:18.80px;top:295px;font-size:15px;line-height:19px;height:19px;color:#f4f4ff;transform:scaleX(1.0000);">1</div>
<div class="a" style="left:38px;top:292px;width:186px;height:26px;border:1px solid #4c4c54;box-sizing:border-box;"></div>
<svg class="a" style="left:44px;top:301.5px;" width="11" height="7" viewBox="0 0 11 7" fill="none" stroke-linecap="round" stroke-linejoin="round"><path d="M1 1.500l4.500 3l4.500-3" stroke="#9a9aa2" stroke-width="1.100"/></svg>
<div class="t" style="left:59.20px;top:294px;font-size:15.2px;line-height:19px;height:19px;color:#e8e8ea;transform:scaleX(0.9469);">Generic PLA</div>
<div class="a" style="left:261px;top:295px;width:20px;height:20px;background:#00c1ae;"></div>
<div class="t" style="left:266.80px;top:295px;font-size:15px;line-height:19px;height:19px;color:#10221f;transform:scaleX(1.0000);">2</div>
<div class="a" style="left:286px;top:292px;width:198px;height:26px;border:1px solid #4c4c54;box-sizing:border-box;"></div>
<svg class="a" style="left:292px;top:301.5px;" width="11" height="7" viewBox="0 0 11 7" fill="none" stroke-linecap="round" stroke-linejoin="round"><path d="M1 1.500l4.500 3l4.500-3" stroke="#9a9aa2" stroke-width="1.100"/></svg>
<div class="t" style="left:307.00px;top:294px;font-size:15.2px;line-height:19px;height:19px;color:#e8e8ea;transform:scaleX(0.9481);">Generic PLA</div>
<div class="a" style="left:13px;top:325px;width:20px;height:20px;background:#f5dfb8;"></div>
<div class="t" style="left:18.80px;top:325px;font-size:15px;line-height:19px;height:19px;color:#1c1a16;transform:scaleX(1.0000);">3</div>
<div class="a" style="left:38px;top:322px;width:186px;height:26px;border:1px solid #4c4c54;box-sizing:border-box;"></div>
<svg class="a" style="left:44px;top:331.5px;" width="11" height="7" viewBox="0 0 11 7" fill="none" stroke-linecap="round" stroke-linejoin="round"><path d="M1 1.500l4.500 3l4.500-3" stroke="#9a9aa2" stroke-width="1.100"/></svg>
<div class="t" style="left:59.20px;top:324px;font-size:15.2px;line-height:19px;height:19px;color:#e8e8ea;transform:scaleX(0.9469);">Generic PLA</div>
<div class="a" style="left:261px;top:325px;width:20px;height:20px;background:#ee1c25;"></div>
<div class="t" style="left:266.80px;top:325px;font-size:15px;line-height:19px;height:19px;color:#fff4f4;transform:scaleX(1.0000);">4</div>
<div class="a" style="left:286px;top:322px;width:198px;height:26px;border:1px solid #4c4c54;box-sizing:border-box;"></div>
<svg class="a" style="left:292px;top:331.5px;" width="11" height="7" viewBox="0 0 11 7" fill="none" stroke-linecap="round" stroke-linejoin="round"><path d="M1 1.500l4.500 3l4.500-3" stroke="#9a9aa2" stroke-width="1.100"/></svg>
<div class="t" style="left:307.00px;top:324px;font-size:15.2px;line-height:19px;height:19px;color:#e8e8ea;transform:scaleX(0.9481);">Generic PLA</div>
<svg class="a" style="left:230px;top:296.5px;" width="17" height="17" viewBox="0 0 17 17" fill="none" stroke-linecap="round" stroke-linejoin="round"><path d="M13 1.500h-10.500a1 1 0 0 0 -1 1v11a1 1 0 0 0 1 1h11a1 1 0 0 0 1-1v-9.500" stroke="#b4b4ba" stroke-width="1.100"/><path d="M5.200 8.800l7.300-7.300a1.400 1.400 0 0 1 2 2l-7.300 7.300l-2.800.800z" stroke="#b4b4ba" stroke-width="1.100"/></svg>
<svg class="a" style="left:490px;top:296.5px;" width="17" height="17" viewBox="0 0 17 17" fill="none" stroke-linecap="round" stroke-linejoin="round"><path d="M13 1.500h-10.500a1 1 0 0 0 -1 1v11a1 1 0 0 0 1 1h11a1 1 0 0 0 1-1v-9.500" stroke="#b4b4ba" stroke-width="1.100"/><path d="M5.200 8.800l7.300-7.300a1.400 1.400 0 0 1 2 2l-7.300 7.300l-2.800.800z" stroke="#b4b4ba" stroke-width="1.100"/></svg>
<svg class="a" style="left:230px;top:326.5px;" width="17" height="17" viewBox="0 0 17 17" fill="none" stroke-linecap="round" stroke-linejoin="round"><path d="M13 1.500h-10.500a1 1 0 0 0 -1 1v11a1 1 0 0 0 1 1h11a1 1 0 0 0 1-1v-9.500" stroke="#b4b4ba" stroke-width="1.100"/><path d="M5.200 8.800l7.300-7.300a1.400 1.400 0 0 1 2 2l-7.300 7.300l-2.800.800z" stroke="#b4b4ba" stroke-width="1.100"/></svg>
<svg class="a" style="left:490px;top:326.5px;" width="17" height="17" viewBox="0 0 17 17" fill="none" stroke-linecap="round" stroke-linejoin="round"><path d="M13 1.500h-10.500a1 1 0 0 0 -1 1v11a1 1 0 0 0 1 1h11a1 1 0 0 0 1-1v-9.500" stroke="#b4b4ba" stroke-width="1.100"/><path d="M5.200 8.800l7.300-7.300a1.400 1.400 0 0 1 2 2l-7.300 7.300l-2.800.800z" stroke="#b4b4ba" stroke-width="1.100"/></svg>
<div class="a" style="left:1px;top:366px;width:520px;height:30px;background:#36363b;"></div>
<svg class="a" style="left:10px;top:372px;" width="17" height="17" viewBox="0 0 17 17" fill="none" stroke-linecap="round" stroke-linejoin="round"><path d="M8.500 1.500l7 3.300l-7 3.300l-7-3.300z" stroke="#9a9aa0" stroke-width="1.100"/><path d="M1.500 8.300l7 3.300l7-3.300" stroke="#12998a" stroke-width="1.200"/><path d="M1.500 11.800l7 3.300l7-3.300" stroke="#9a9aa0" stroke-width="1.100"/></svg>
<div class="t" style="left:34.00px;top:371px;font-size:15.2px;line-height:19px;height:19px;color:#e8e8ea;transform:scaleX(0.9434);">Process</div>
<div class="a" style="left:116px;top:370px;width:102.5px;height:22px;background:#2f2f35;border-radius:11px;"></div>
<div class="a" style="left:116px;top:370px;width:52.5px;height:22px;background:#00695c;border-radius:11px;"></div>
<div class="t" style="left:125.00px;top:372px;font-size:13.5px;line-height:17px;height:17px;color:#eef4f2;transform:scaleX(0.8893);">Global</div>
<div class="t" style="left:171.00px;top:372px;font-size:13.5px;line-height:17px;height:17px;color:#74747c;transform:scaleX(0.8959);">Objects</div>
<div class="t" style="left:346.00px;top:372px;font-size:12.6px;line-height:16px;height:16px;color:#e2e2e4;transform:scaleX(0.9815);">Advanced</div>
<div class="a" style="left:409px;top:372.5px;width:23px;height:16.5px;background:#00695c;border-radius:5.5px;"></div>
<div class="a" style="left:418px;top:374.5px;width:12.5px;height:12.5px;background:#d5dad9;border-radius:3.5px;"></div>
<svg class="a" style="left:464px;top:372px;" width="17" height="17" viewBox="0 0 17 17" fill="none" stroke-linecap="round" stroke-linejoin="round"><rect x="1" y="1" width="15" height="15" rx="1.500" stroke="#b4b4ba" stroke-width="1.100"/><path d="M3.500 5h1.500M6.800 5h6.500M3.500 8.500h1.500M6.800 8.500h6.500M3.500 12h1.500M6.800 12h6.500" stroke="#12998a" stroke-width="1.200"/></svg>
<svg class="a" style="left:493px;top:371px" width="19" height="19" viewBox="0 0 19 19" fill="none" stroke-linecap="round" stroke-linejoin="round"><text x="0.500" y="8" font-family="Liberation Sans,sans-serif" font-size="8.500" fill="#b4b4ba">A</text><text x="11.500" y="18" font-family="Liberation Sans,sans-serif" font-size="8.500" fill="#b4b4ba">B</text><path d="M15.500 8v-2.500a1.500 1.500 0 0 0 -1.500-1.500h-3.500 M12.500 2l-2 2l2 2" stroke="#12998a" stroke-width="1.200"/><path d="M3 11v2.500a1.500 1.500 0 0 0 1.500 1.500h3.500 M6 13l2 2l-2 2" stroke="#12998a" stroke-width="1.200"/></svg>
<svg class="a" style="left:15px;top:415px;" width="15" height="15" viewBox="0 0 15 15" fill="none" stroke-linecap="round" stroke-linejoin="round"><path d="M3.200 4.200A5.800 5.800 0 1 1 1.600 9" stroke="#f07a2c" stroke-width="1.200"/><path d="M1.300 1.200v3.500h3.500" stroke="#f07a2c" stroke-width="1.200"/></svg>
<div class="a" style="left:38px;top:410px;width:411px;height:26px;border:1px solid #4c4c54;box-sizing:border-box;"></div>
<svg class="a" style="left:44px;top:419.5px;" width="11" height="7" viewBox="0 0 11 7" fill="none" stroke-linecap="round" stroke-linejoin="round"><path d="M1 1.500l4.500 3l4.500-3" stroke="#9a9aa2" stroke-width="1.100"/></svg>
<div class="t" style="left:59.20px;top:412px;font-size:15.2px;line-height:19px;height:19px;color:#e8e8ea;transform:scaleX(0.9658);">* 0.20mm Standard @BBL X1C</div>
<svg class="a" style="left:460px;top:414.5px;" width="16" height="16" viewBox="0 0 16 16" fill="none" stroke-linecap="round" stroke-linejoin="round"><path d="M1.500 1.500h10l3 3v10h-13z M4.300 1.800v3.600h6v-3.600 M4 14.200v-4.700h8v4.700" stroke="#b4b4ba" stroke-width="1.100"/></svg>
<svg class="a" style="left:490px;top:414.5px;" width="17" height="17" viewBox="0 0 17 17" fill="none" stroke-linecap="round" stroke-linejoin="round"><circle cx="7.200" cy="7.200" r="5.700" stroke="#b4b4ba" stroke-width="1.100"/><path d="M11.300 11.300l4.200 4.200" stroke="#b4b4ba" stroke-width="1.100"/><path d="M4 7a3.300 3.300 0 0 1 3-3" stroke="#b4b4ba" stroke-width=".800"/></svg>
<div class="t" style="left:17.50px;top:456px;font-size:15px;line-height:19px;height:19px;color:#7d7d85;transform:scaleX(1.0282);">Quality</div>
<div class="t" style="left:93.80px;top:456px;font-size:15px;line-height:19px;height:19px;color:#7d7d85;transform:scaleX(1.0141);">Strength</div>
<div class="t" style="left:179.70px;top:456px;font-size:15px;line-height:19px;height:19px;color:#7d7d85;transform:scaleX(0.9592);">Speed</div>
<div class="t" style="left:249.50px;top:456px;font-size:15px;line-height:19px;height:19px;color:#f0744c;font-weight:700;transform:scaleX(1.0003);">Support</div>
<div class="t" style="left:335.30px;top:456px;font-size:15px;line-height:19px;height:19px;color:#7d7d85;transform:scaleX(1.0457);">Multimaterial</div>
<div class="t" style="left:453.20px;top:456px;font-size:15px;line-height:19px;height:19px;color:#7d7d85;transform:scaleX(0.9797);">Others</div>
<div class="a" style="left:1px;top:480px;width:520px;height:1px;background:#4a4a50;"></div>
<div class="a" style="left:246.7px;top:476.7px;width:63.3px;height:3.4px;background:#0f9c8c;border-radius:1.7px;"></div>
<svg class="a" style="left:5px;top:491.3px;" width="19" height="19" viewBox="0 0 19 19" fill="none" stroke-linecap="round" stroke-linejoin="round"><path d="M2.400 1.100H16.400a1 1 0 0 1 1 1V14.100a1 1 0 0 1 -1 1H13.600a1 1 0 0 1 -1-1V6.100a1 1 0 0 0 -1-1H2.400a1 1 0 0 1 -1-1V2.100a1 1 0 0 1 1-1Z M1.400 17.200H17.400" stroke="#a2a2a6" stroke-width="1.200"/><path d="M1.600 6V15.100H7.600V6M3.600 6V15.100M5.600 6V15.100" stroke="#12998a" stroke-width="1.200" stroke-linecap="butt"/></svg>
<div class="t" style="left:29.30px;top:491px;font-size:15px;line-height:19px;height:19px;color:#c9c9ce;font-weight:700;transform:scaleX(0.9829);">Support</div>
<div class="a" style="left:91.3px;top:500.8px;width:424.40000000000003px;height:1px;background:#4a4a50;"></div>
<svg class="a" style="left:5px;top:806.2px;" width="19" height="19" viewBox="0 0 19 19" fill="none" stroke-linecap="round" stroke-linejoin="round"><rect x="1.400" y="1.300" width="16.100" height="9.700" rx="1.200" stroke="#a2a2a6" stroke-width="1.200"/><path d="M1.400 17.300H17.500" stroke="#a2a2a6" stroke-width="1.200"/><path d="M1.5 11.800V15.300M3.5 11.800V15.300M5.5 11.800V15.300M7.5 11.800V15.300M9.5 11.800V15.300M11.5 11.800V15.300M13.5 11.800V15.300M15.5 11.800V15.300M17.5 11.800V15.300M1.500 15.300H17.500" stroke="#12998a" stroke-width="1.200" stroke-linecap="butt"/></svg>
<div class="t" style="left:29.30px;top:806px;font-size:15px;line-height:19px;height:19px;color:#c9c9ce;font-weight:700;transform:scaleX(1.0184);">Raft</div>
<div class="a" style="left:64.5px;top:815.7px;width:451.20000000000005px;height:1px;background:#4a4a50;"></div>
<svg class="a" style="left:5px;top:873.3px;" width="19" height="19" viewBox="0 0 19 19" fill="none" stroke-linecap="round" stroke-linejoin="round"><ellipse cx="3.100" cy="9.100" rx="1.900" ry="8.200" stroke="#9a9aa0" stroke-width="1.100"/><ellipse cx="7.500" cy="9.100" rx="2.300" ry="8.200" stroke="#9a9aa0" stroke-width="1.100"/><path d="M5.600 1a2.100 8.200 0 0 0 0 16.300" stroke="#12998a" stroke-width="1.300"/><rect x="11.400" y="1.100" width="6.300" height="3.200" rx=".500" stroke="#a2a2a6" stroke-width="1.300"/><path d="M9.100 17.200H10.600a.800 .800 0 0 0 .800-.800V7a.800 .800 0 0 1 .800-.800H12.900a.800 .800 0 0 1 .800 .800V16.400a.800 .800 0 0 0 .800 .800H14.900a.800 .800 0 0 0 .800-.800V7a.800 .800 0 0 1 .800-.800H16.700a.800 .800 0 0 1 .800 .800V17.500" stroke="#12998a" stroke-width="1.400"/></svg>
<div class="t" style="left:29.30px;top:872px;font-size:15px;line-height:19px;height:19px;color:#c9c9ce;font-weight:700;transform:scaleX(0.9716);">Filament for Supports</div>
<div class="a" style="left:186.2px;top:882.8px;width:329.50000000000006px;height:1px;background:#4a4a50;"></div>
<div class="t" style="left:31.90px;top:523px;font-size:15px;line-height:19px;height:19px;color:#e5713f;transform:scaleX(1.0387);">Enable support</div>
<svg class="a" style="left:254.5px;top:525.5px;" width="14" height="14" viewBox="0 0 15 15" fill="none" stroke-linecap="round" stroke-linejoin="round"><path d="M3.200 4.200A5.800 5.800 0 1 1 1.600 9" stroke="#f07a2c" stroke-width="1.200"/><path d="M1.300 1.200v3.500h3.500" stroke="#f07a2c" stroke-width="1.200"/></svg>
<div class="a" style="left:268px;top:525px;width:15px;height:15px;background:#12998a;border-radius:2px;"></div>
<svg class="a" style="left:268px;top:525px;" width="15" height="15" viewBox="0 0 15 15" fill="none" stroke-linecap="round" stroke-linejoin="round"><path d="M3.200 7.600l3.300 2.700l5.500-4.200" stroke="#fff" stroke-width="1.300"/></svg>
<div class="t" style="left:31.90px;top:554px;font-size:15px;line-height:19px;height:19px;color:#b6bac1;transform:scaleX(0.9810);">Type</div>
<div class="a" style="left:268px;top:551px;width:132px;height:26px;border:1px solid #4c4c54;box-sizing:border-box;"></div>
<svg class="a" style="left:274px;top:560.5px;" width="11" height="7" viewBox="0 0 11 7" fill="none" stroke-linecap="round" stroke-linejoin="round"><path d="M1 1.500l4.500 3l4.500-3" stroke="#9a9aa2" stroke-width="1.100"/></svg>
<div class="t" style="left:289.20px;top:554px;font-size:15.2px;line-height:19px;height:19px;color:#e8e8ea;transform:scaleX(1.0205);">Normal(auto)</div>
<div class="t" style="left:31.90px;top:585px;font-size:15px;line-height:19px;height:19px;color:#b6bac1;transform:scaleX(0.9836);">Style</div>
<div class="a" style="left:268px;top:582px;width:132px;height:26px;border:1px solid #4c4c54;box-sizing:border-box;"></div>
<svg class="a" style="left:274px;top:591.5px;" width="11" height="7" viewBox="0 0 11 7" fill="none" stroke-linecap="round" stroke-linejoin="round"><path d="M1 1.500l4.500 3l4.500-3" stroke="#9a9aa2" stroke-width="1.100"/></svg>
<div class="a" style="left:269px;top:583px;width:130px;height:24px;overflow:hidden">
<div class="t" style="left:20.20px;top:3px;font-size:15.2px;line-height:19px;height:19px;color:#e8e8ea;transform:scaleX(0.9794);">Default (Grid/O...</div>
</div>
<div class="t" style="left:31.90px;top:616px;font-size:15px;line-height:19px;height:19px;color:#e5713f;transform:scaleX(1.0236);">Threshold angle</div>
<svg class="a" style="left:254.5px;top:618.5px;" width="14" height="14" viewBox="0 0 15 15" fill="none" stroke-linecap="round" stroke-linejoin="round"><path d="M3.200 4.200A5.800 5.800 0 1 1 1.600 9" stroke="#f07a2c" stroke-width="1.200"/><path d="M1.300 1.200v3.500h3.500" stroke="#f07a2c" stroke-width="1.200"/></svg>
<div class="a" style="left:268px;top:613px;width:132px;height:26px;border:1px solid #0e8a7b;box-sizing:border-box;"></div>
<svg class="a" style="left:271px;top:616px;" width="12" height="20" viewBox="0 0 12 20" fill="none" stroke-linecap="round" stroke-linejoin="round"><path d="M2 5l3.500-2.500l3.500 2.500 M2 15l3.500 2.500l3.500-2.500" stroke="#8e8e96" stroke-width="1"/><path d="M1 10h10" stroke="#4c4c54" stroke-width="1"/></svg>
<div class="t" style="left:290.00px;top:616px;font-size:15.2px;line-height:19px;height:19px;color:#aaa6ad;transform:scaleX(1.0000);">1</div>
<div class="t" style="left:390.50px;top:616px;font-size:12px;line-height:16px;height:16px;color:#8a8a92;transform:scaleX(1.0000);">°</div>
<div class="t" style="left:31.90px;top:647px;font-size:15px;line-height:19px;height:19px;color:#b6bac1;transform:scaleX(1.0230);">Threshold overlap</div>
<div class="a" style="left:268px;top:644px;width:132px;height:26px;border:1px solid #4c4c54;box-sizing:border-box;"></div>
<div class="t" style="left:273.40px;top:647px;font-size:15.2px;line-height:19px;height:19px;color:#e8e8ea;transform:scaleX(1.0000);">50</div>
<div class="t" style="left:383.00px;top:650px;font-size:12px;line-height:16px;height:16px;color:#8a8a92;transform:scaleX(1.0000);">%</div>
<div class="t" style="left:31.90px;top:678px;font-size:15px;line-height:19px;height:19px;color:#b6bac1;transform:scaleX(1.0016);">First layer density</div>
<div class="a" style="left:268px;top:675px;width:132px;height:26px;border:1px solid #4c4c54;box-sizing:border-box;"></div>
<div class="t" style="left:273.40px;top:678px;font-size:15.2px;line-height:19px;height:19px;color:#e8e8ea;transform:scaleX(1.0000);">90</div>
<div class="t" style="left:383.00px;top:681px;font-size:12px;line-height:16px;height:16px;color:#8a8a92;transform:scaleX(1.0000);">%</div>
<div class="t" style="left:31.90px;top:709px;font-size:15px;line-height:19px;height:19px;color:#b6bac1;transform:scaleX(1.0009);">First layer expansion</div>
<div class="a" style="left:268px;top:706px;width:132px;height:26px;border:1px solid #4c4c54;box-sizing:border-box;"></div>
<div class="t" style="left:273.40px;top:709px;font-size:15.2px;line-height:19px;height:19px;color:#e8e8ea;transform:scaleX(1.0000);">2</div>
<div class="t" style="left:370.30px;top:713px;font-size:12.5px;line-height:16px;height:16px;color:#8a8a92;transform:scaleX(0.9460);">mm</div>
<div class="t" style="left:31.90px;top:740px;font-size:15px;line-height:19px;height:19px;color:#b6bac1;transform:scaleX(1.0504);">On build plate only</div>
<div class="a" style="left:268px;top:742.5px;width:15px;height:15px;border:1px solid #4c4c54;box-sizing:border-box;border-radius:2px;"></div>
<div class="t" style="left:31.90px;top:771px;font-size:15px;line-height:19px;height:19px;color:#b6bac1;transform:scaleX(0.9850);">Remove small overhangs</div>
<div class="a" style="left:268px;top:773px;width:15px;height:15px;background:#12998a;border-radius:2px;"></div>
<svg class="a" style="left:268px;top:773px;" width="15" height="15" viewBox="0 0 15 15" fill="none" stroke-linecap="round" stroke-linejoin="round"><path d="M3.200 7.600l3.300 2.700l5.500-4.200" stroke="#fff" stroke-width="1.300"/></svg>
<div class="t" style="left:31.90px;top:838px;font-size:15px;line-height:19px;height:19px;color:#b6bac1;transform:scaleX(0.9709);">Raft layers</div>
<div class="a" style="left:268px;top:835px;width:132px;height:26px;border:1px solid #4c4c54;box-sizing:border-box;"></div>
<svg class="a" style="left:271px;top:838px;" width="12" height="20" viewBox="0 0 12 20" fill="none" stroke-linecap="round" stroke-linejoin="round"><path d="M2 5l3.500-2.500l3.500 2.500 M2 15l3.500 2.500l3.500-2.500" stroke="#8e8e96" stroke-width="1"/><path d="M1 10h10" stroke="#4c4c54" stroke-width="1"/></svg>
<div class="t" style="left:289.50px;top:837px;font-size:15.2px;line-height:19px;height:19px;color:#e8e8ea;transform:scaleX(1.0000);">0</div>
<div class="t" style="left:364.20px;top:840px;font-size:12.5px;line-height:16px;height:16px;color:#8a8a92;transform:scaleX(0.9298);">layers</div>
<div class="a" style="left:1px;top:897px;width:520px;height:1px;background:repeating-linear-gradient(90deg,#6a6a72 0 6px,transparent 6px 10px)"></div>
<div class="a" style="left:281.700px;top:606.700px;width:50px;height:50px;border-radius:25px;background:rgba(214,72,128,.28)"></div>
<div class="a" style="left:292.700px;top:617.700px;width:28px;height:28px;border-radius:14px;background:rgba(214,72,128,.32)"></div>
<div class="a" style="left:303.200px;top:628.200px;width:7px;height:7px;border-radius:4px;background:rgba(172,52,100,.8)"></div>
<div class="a" style="left:74px;top:639px;width:526px;height:56px;background:rgba(210,66,119,.965);border-radius:5px;"></div>
<div class="t" style="left:90.00px;top:652px;font-size:12.5px;line-height:16px;height:16px;color:#fbe9f0;transform:scaleX(1.0772);">Support will be generated for overhangs whose slope angle is below this threshold.</div>
<div class="t" style="left:90.00px;top:668px;font-size:12.5px;line-height:16px;height:16px;color:#fbe9f0;transform:scaleX(1.0905);">parameter name</div>
<div class="t" style="left:210.00px;top:668px;font-size:12.5px;line-height:16px;height:16px;color:#fbe9f0;transform:scaleX(1.1001);">: support_threshold_angle</div>
</div></body></html>
